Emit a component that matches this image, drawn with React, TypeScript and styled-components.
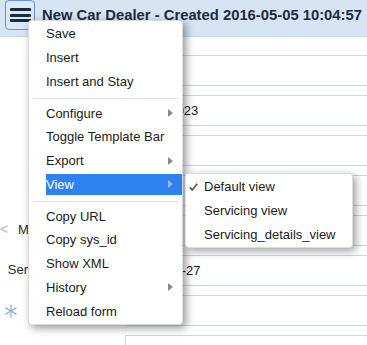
import React from 'react';
import styled, { createGlobalStyle } from 'styled-components';

const GlobalStyle = createGlobalStyle`
  html, body {
    margin: 0;
    padding: 0;
    background: #ffffff;
    font-family: "Liberation Sans", Arial, sans-serif;
  }
`;

const Page = styled.div`
  position: relative;
  width: 367px;
  height: 345px;
  overflow: hidden;
  background: #ffffff;
`;

const Header = styled.div`
  display: flex;
  align-items: flex-start;
  gap: 7px;
  height: 36px;
  padding-left: 5px;
  background: #d6e4f4;
  border-bottom: 1px solid #c6d5e6;
`;

const MenuButton = styled.button`
  flex-shrink: 0;
  box-sizing: border-box;
  display: flex;
  flex-direction: column;
  justify-content: center;
  align-items: center;
  gap: 2.5px;
  width: 30px;
  height: 30px;
  padding: 0;
  border: 1px solid #5f96d5;
  border-radius: 4px;
  background: #dbe8f6;
`;

const Bar = styled.span`
  display: block;
  width: 21px;
  height: 3px;
  border-radius: 1px;
  background: #1c2a40;
`;

const Title = styled.h1`
  flex-shrink: 0;
  margin: 0;
  font-size: 14.8px;
  line-height: 30px;
  font-weight: bold;
  color: #1d2b44;
  white-space: nowrap;
`;

const Form = styled.div`
  display: flex;
  flex-direction: column;
  gap: 9px;
  padding-top: 18px;
`;

const Row = styled.div`
  display: grid;
  grid-template-columns: 125px 1fr;
  height: 31px;
`;

const Label = styled.div`
  display: flex;
  align-items: center;
  padding: 0 3px 3px 0;
  font-size: 13px;
  color: #2b2b2b;
  white-space: nowrap;
`;

const BackMarker = styled.span`
  color: #b3bcc8;
  font-size: 14px;
  line-height: 1;
`;

const StarMarker = styled.svg`
  margin: 3px 0 0 5px;
`;

const LabelText = styled.span`
  margin-left: auto;
`;

const Field = styled.div`
  display: flex;
  align-items: center;
  padding-left: 8px;
  border: 1px solid #cbd6e3;
  border-right: none;
  font-size: 13px;
  color: #222;
  white-space: nowrap;
`;

const Menu = styled.div`
  position: absolute;
  top: 20px;
  left: 28px;
  width: 153px;
  padding: 1px 0;
  background: #ffffff;
  border: 1px solid rgba(0, 0, 0, 0.14);
  border-radius: 4px;
  box-shadow: 3px 3px 8px rgba(0, 0, 0, 0.42);
  font-size: 13px;
`;

const Item = styled.div<{ $active?: boolean }>`
  position: relative;
  display: flex;
  align-items: center;
  height: 23.75px;
  padding: 1.25px 0 1.25px 17px;
  box-sizing: border-box;
  background: ${(p) => (p.$active ? '#2f80f0' : 'transparent')};
  background-clip: content-box;
  color: ${(p) => (p.$active ? '#ffffff' : '#1b1b1b')};
  white-space: nowrap;
`;

const Arrow = styled.span<{ $active?: boolean }>`
  position: absolute;
  right: 9px;
  top: 50%;
  margin-top: -4px;
  width: 0;
  height: 0;
  border-top: 4px solid transparent;
  border-bottom: 4px solid transparent;
  border-left: 5px solid ${(p) => (p.$active ? '#9fb6d4' : '#8a8a8a')};
`;

const Separator = styled.div`
  height: 1px;
  margin: 5px 4px 2px;
  background: #e2dde2;
`;

const Submenu = styled.div`
  position: absolute;
  top: 0;
  left: calc(100% + 3px);
  width: 166px;
  padding: 1px 0 0;
  background: #ffffff;
  border: 1px solid rgba(0, 0, 0, 0.14);
  border-radius: 4px;
  box-shadow: 3px 3px 8px rgba(0, 0, 0, 0.38);
`;

const SubItem = styled.div`
  position: relative;
  display: flex;
  align-items: center;
  height: 24px;
  padding-left: 18px;
  color: #1b1b1b;
  white-space: nowrap;
`;

const Check = styled.svg`
  position: absolute;
  left: 3px;
  top: 8px;
`;

type Entry = { label: string; sub?: boolean; active?: boolean } | 'sep';

const entries: Entry[] = [
  { label: 'Save' },
  { label: 'Insert' },
  { label: 'Insert and Stay' },
  'sep',
  { label: 'Configure', sub: true },
  { label: 'Toggle Template Bar' },
  { label: 'Export', sub: true },
  { label: 'View', sub: true, active: true },
  'sep',
  { label: 'Copy URL' },
  { label: 'Copy sys_id' },
  { label: 'Show XML' },
  { label: 'History', sub: true },
  { label: 'Reload form' },
];

const views = [
  { label: 'Default view', checked: true },
  { label: 'Servicing view' },
  { label: 'Servicing_details_view' },
];

const rows: { label: string; value?: string; marker?: 'back' | 'star' }[] = [
  { label: 'Number' },
  { label: 'Dealer ID', value: 'DL-000023' },
  { label: 'Name' },
  { label: 'Location' },
  { label: 'Maintenance Plan', marker: 'back' },
  { label: 'Service Expiry Date', value: '2016-05-27' },
  { label: 'Service Type', marker: 'star' },
  { label: 'Service Start Date' },
];

export default function App() {
  return (
    <Page>
      <GlobalStyle />
      <Header>
        <MenuButton aria-label="Context menu">
          <Bar />
          <Bar />
          <Bar />
        </MenuButton>
        <Title>New Car Dealer - Created 2016-05-05 10:04:57</Title>
      </Header>

      <Form>
        {rows.map((r) => (
          <Row key={r.label}>
            <Label>
              {r.marker === 'back' && <BackMarker>&lt;</BackMarker>}
              {r.marker === 'star' && (
                <StarMarker width="12" height="14" viewBox="0 0 12 14">
                  <g stroke="#8db5e2" strokeWidth="1.3" strokeLinecap="round">
                    <line x1="6" y1="0.8" x2="6" y2="13.2" />
                    <line x1="0.8" y1="3.9" x2="11.2" y2="10.1" />
                    <line x1="0.8" y1="10.1" x2="11.2" y2="3.9" />
                  </g>
                </StarMarker>
              )}
              <LabelText>{r.label}</LabelText>
            </Label>
            <Field>{r.value}</Field>
          </Row>
        ))}
      </Form>

      <Menu>
        {entries.map((e, i) =>
          e === 'sep' ? (
            <Separator key={`sep-${i}`} />
          ) : (
            <Item key={e.label} $active={e.active}>
              {e.label}
              {e.sub && <Arrow $active={e.active} />}
              {e.active && (
                <Submenu>
                  {views.map((v) => (
                    <SubItem key={v.label}>
                      {v.checked && (
                        <Check width="9" height="8" viewBox="0 0 9 8">
                          <polyline
                            points="0.8,4.4 3.2,7 8.2,0.8"
                            fill="none"
                            stroke="#555"
                            strokeWidth="1.6"
                          />
                        </Check>
                      )}
                      {v.label}
                    </SubItem>
                  ))}
                </Submenu>
              )}
            </Item>
          )
        )}
      </Menu>
    </Page>
  );
}
